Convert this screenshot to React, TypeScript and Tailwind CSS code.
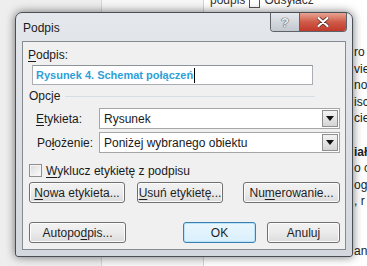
import React from 'react'

const font = { fontFamily: '"Liberation Sans", Arial, sans-serif' }

function U({ children }: { children: React.ReactNode }) {
  return <span className="underline underline-offset-2">{children}</span>
}

function Btn({ w, children, focused }: { w: string; children: React.ReactNode; focused?: boolean }) {
  return (
    <div
      className={`${w} h-[21px] rounded-[3px] border flex items-center justify-center text-[12px] text-[#1e1e1e] ${
        focused
          ? 'border-[#3c7fb1] bg-gradient-to-b from-[#eaf6fd] to-[#d9f0fc] shadow-[inset_0_0_0_1px_#b8e2f7]'
          : 'border-[#707070] bg-gradient-to-b from-[#f2f2f2] via-[#ebebeb] to-[#dcdcdc] shadow-[inset_0_0_0_1px_#fcfcfc]'
      }`}
    >
      {children}
    </div>
  )
}

function Combo({ value }: { value: string }) {
  return (
    <div className="w-[241px] h-[21px] bg-white border border-[#a6a6a6] flex items-center justify-between pl-[4px] pr-[1px]">
      <span className="text-[12px] text-[#1a1a1a]">{value}</span>
      <div className="w-[16px] h-[17px] border border-[#8f8f8f] bg-gradient-to-b from-[#f3f3f3] to-[#d5d5d5] flex items-center justify-center">
        <svg width="8" height="5" viewBox="0 0 8 5">
          <path d="M0 0 H8 L4 5 Z" fill="#111" />
        </svg>
      </div>
    </div>
  )
}

const docLines = ['ro', 'vie', 'no', 'isc', 'cie', '', 'iał', 'o c', 'og', ', r', '', '', 'an']

export default function App() {
  return (
    <div className="relative w-[367px] h-[266px] overflow-hidden bg-[#f1f1f1]" style={font}>
      {/* document behind */}
      <div className="absolute inset-0 flex">
        <div className="w-[102px] border-r border-[#d4d4d4] bg-[#eeeeee]" />
        <div className="w-[102px] border-r border-[#d4d4d4] bg-[#f6f6f6]" />
        <div className="flex-1 bg-white relative">
          <div className="flex items-center gap-[4px] text-[12px] text-[#333] ml-[6px] -mt-[8px] h-[16px]">
            <span>podpis</span>
            <span className="inline-block w-[11px] h-[9px] border border-[#555] mt-[6px]" />
            <span>Odsyłacz</span>
          </div>
          <div className="absolute top-[44px] left-[150px] flex flex-col text-[12px] text-[#222]">
            {docLines.map((t, i) => (
              <div key={i} className={`h-[16.6px] leading-[16px] whitespace-nowrap ${t === 'iał' ? 'font-bold' : ''}`}>{t}</div>
            ))}
          </div>
        </div>
      </div>

      {/* dialog window */}
      <div className="absolute left-[15px] top-[12px] w-[338px] h-[245px] rounded-t-[7px] rounded-b-[3px] border border-[#4a4f55] bg-gradient-to-b from-[#e4e7ec] to-[#d3d8de] shadow-[0_0_10px_rgba(0,0,0,0.55)] px-[6px] pb-[6px]">
        <div className="h-[28px] flex items-center pl-[1px] pt-[2px] text-[12px] text-[#1a1a1a]">Podpis</div>

        {/* caption buttons */}
        <div className="absolute top-0 right-[5px] flex h-[19px] rounded-b-[4px] border border-t-0 border-[#5d6268] overflow-hidden">
          <div className="w-[29px] h-full border-r border-[#5d6268] bg-gradient-to-b from-[#e5e8ec] to-[#c3c8cf] flex items-center justify-center">
            <span className="text-[13px] font-bold text-[#f2f2f2] leading-none" style={{ textShadow: '0 0 1px #333, 0 0 1px #333' }}>?</span>
          </div>
          <div className="w-[46px] h-full bg-gradient-to-b from-[#e8a392] via-[#cf5a48] to-[#c0392b] flex items-center justify-center">
            <svg width="12" height="10" viewBox="0 0 12 10">
              <path d="M1.5 1 L10.5 9 M10.5 1 L1.5 9" stroke="#5b2a22" strokeWidth="3.6" strokeLinecap="round" />
              <path d="M1.5 1 L10.5 9 M10.5 1 L1.5 9" stroke="#ffffff" strokeWidth="2.2" strokeLinecap="round" />
            </svg>
          </div>
        </div>

        {/* client area */}
        <div className="w-[324px] h-[209px] border border-[#868b92] bg-[#f0f0f0] pt-[6px] text-[12px] text-[#1a1a1a]">
          <div className="pl-[5px] h-[15px] leading-[15px]"><U>P</U>odpis:</div>
          <div className="ml-[9px] mt-[2px] w-[281px] h-[20px] bg-white border border-[#abadb3] border-t-[#8e9399] flex items-center pl-[3px]">
            <span className="text-[11px] font-bold text-[#2f9fd8]">Rysunek 4. Schemat połączeń</span>
            <span className="w-px h-[15px] bg-black ml-px" />
          </div>

          <div className="mt-[4px] pl-[6px] flex items-center h-[14px]">
            <span>Opcje</span>
            <div className="ml-[5px] w-[250px] h-px bg-[#d6dee4]" />
          </div>

          <div className="mt-[5px] grid grid-cols-[76px_241px] gap-y-[3px] items-center">
            <span className="pl-[13px]"><U>E</U>tykieta:</span>
            <Combo value="Rysunek" />
            <span className="pl-[14px]">Po<U>ł</U>ożenie:</span>
            <Combo value="Poniżej wybranego obiektu" />
          </div>

          <div className="mt-[11px] pl-[6px] flex items-center gap-[4px] h-[13px]">
            <div className="w-[13px] h-[13px] border border-[#8f8f8f] bg-gradient-to-br from-[#dcdcdc] to-[#fbfbfb] shadow-[inset_0_0_0_1px_#f4f4f4]" />
            <span><U>W</U>yklucz etykietę z podpisu</span>
          </div>

          <div className="mt-[5px] pl-[6px] flex">
            <Btn w="w-[96px]"><U>N</U>owa etykieta...</Btn>
            <div className="ml-[12px]"><Btn w="w-[86px]"><U>U</U>suń etykietę...</Btn></div>
            <div className="ml-[20px]"><Btn w="w-[97px]">Nu<U>m</U>erowanie...</Btn></div>
          </div>

          <div className="mt-[19px] pl-[6px] flex">
            <Btn w="w-[97px]">Autopo<U>d</U>pis...</Btn>
            <div className="ml-[57px]"><Btn w="w-[73px]" focused>OK</Btn></div>
            <div className="ml-[11px]"><Btn w="w-[73px]">Anuluj</Btn></div>
          </div>
        </div>
      </div>
    </div>
  )
}
